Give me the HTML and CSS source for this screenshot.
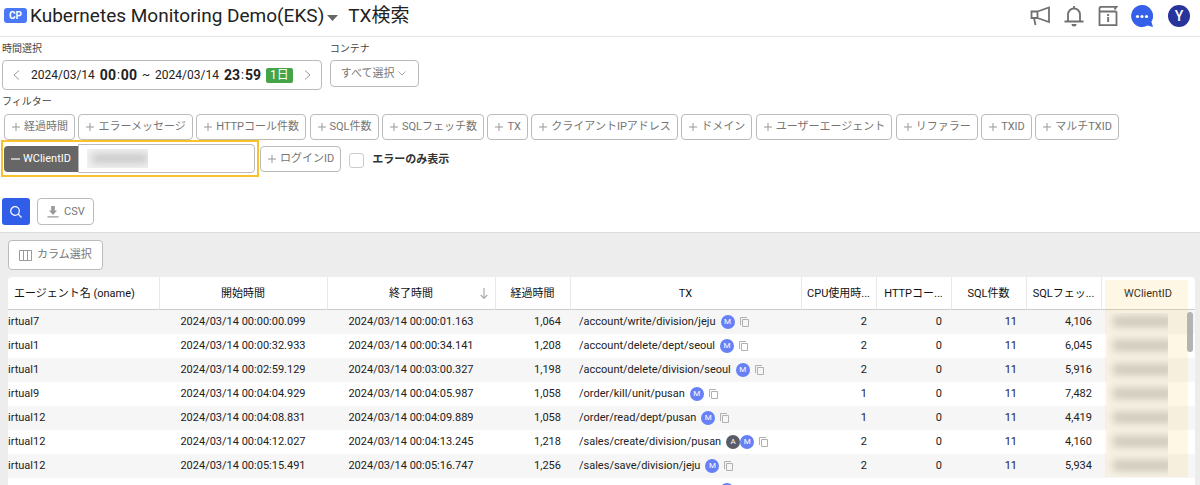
FILE: index.html
```html
<!DOCTYPE html>
<html lang="ja">
<head>
<meta charset="utf-8">
<title>TX検索</title>
<link rel="stylesheet" href="styles.css">
</head>
<body>
<svg class="defs" width="0" height="0" aria-hidden="true">
  <symbol id="plus" viewBox="0 0 10 10"><path d="M5 1v8M1 5h8" fill="none" stroke="currentColor"/></symbol>
  <symbol id="copy" viewBox="0 0 10 10"><path d="M3.500 2.500h6v7h-6zM1.500 8V.5H8" fill="none" stroke="currentColor"/></symbol>
</svg>
<header class="topbar">
  <span class="product">CP</span>
  <button class="project" type="button">Kubernetes Monitoring Demo(EKS)<svg class="caret" viewBox="0 0 11 6"><path d="M0 0h11L5.500 6z" fill="currentColor"/></svg></button>
  <h1 class="title">TX検索</h1>
  <nav class="tools" aria-label="ツール">
    <button class="tool" type="button" aria-label="お知らせ"><svg viewBox="0 0 22 22"><path d="M2.500 6.500h6v6.500h-6zM8.500 6.500l11.500-4v14.500L8.500 13M5 13l1.500 7" fill="none" stroke="currentColor" stroke-width="1.800"/></svg></button>
    <button class="tool" type="button" aria-label="通知"><svg viewBox="0 0 22 22"><path d="M1.500 16.500h19M5 16V9.500a6 6 0 0 1 12 0V16M11 1v3" fill="none" stroke="currentColor" stroke-width="1.800"/><path d="M8.500 19h5a2.500 2.500 0 0 1-5 0z" fill="currentColor"/></svg></button>
    <button class="tool" type="button" aria-label="ガイド"><svg viewBox="0 0 22 22"><path d="M19.500 6.500v13.700h-17V3.500q0-1.700 1.700-1.700h15.300l-2 2.700M2.500 6.500h17" fill="none" stroke="currentColor" stroke-width="1.800"/><path d="M10.200 9h1.900v1.900h-1.900zM10.200 12h1.900v5h-1.900z" fill="currentColor"/></svg></button>
    <button class="tool chat" type="button" aria-label="チャット"><svg viewBox="0 0 22 22"><path d="M11 0a11 11 0 1 0 5.500 20.600L22 22l-1.600-5.200A11 11 0 0 0 11 0z" fill="currentColor"/><g fill="#fff"><circle cx="6.500" cy="11.500" r="1.600"/><circle cx="11" cy="11.500" r="1.600"/><circle cx="15.500" cy="11.500" r="1.600"/></g></svg></button>
    <button class="avatar" type="button">Y</button>
  </nav>
</header>

<main class="main">
<section class="search">
  <div class="pickers">
    <div class="field">
      <span class="label">時間選択</span>
      <div class="period">
        <button class="step" type="button" aria-label="前へ"><svg viewBox="0 0 7 10"><path d="M6 .5L1 5l5 4.500" fill="none" stroke="currentColor"/></svg></button>
        <div class="range"><span>2024/03/14</span><span class="clock"><b>00</b>:<b>00</b></span><span>~</span><span>2024/03/14</span><span class="clock"><b>23</b>:<b>59</b></span></div>
        <span class="days">1日</span>
        <button class="step" type="button" aria-label="次へ"><svg viewBox="0 0 7 10"><path d="M1 .5L6 5 1 9.500" fill="none" stroke="currentColor"/></svg></button>
      </div>
    </div>
    <div class="field">
      <span class="label">コンテナ</span>
      <button class="container-pick" type="button">すべて選択<svg viewBox="0 0 8 5"><path d="M.5.5L4 4 7.500.5" fill="none" stroke="currentColor"/></svg></button>
    </div>
  </div>
  <span class="label">フィルター</span>
  <div class="filters">
    <button class="chip" type="button"><svg><use href="#plus"/></svg>経過時間</button>
    <button class="chip" type="button"><svg><use href="#plus"/></svg>エラーメッセージ</button>
    <button class="chip" type="button"><svg><use href="#plus"/></svg>HTTPコール件数</button>
    <button class="chip" type="button"><svg><use href="#plus"/></svg>SQL件数</button>
    <button class="chip" type="button"><svg><use href="#plus"/></svg>SQLフェッチ数</button>
    <button class="chip" type="button"><svg><use href="#plus"/></svg>TX</button>
    <button class="chip" type="button"><svg><use href="#plus"/></svg>クライアントIPアドレス</button>
    <button class="chip" type="button"><svg><use href="#plus"/></svg>ドメイン</button>
    <button class="chip" type="button"><svg><use href="#plus"/></svg>ユーザーエージェント</button>
    <button class="chip" type="button"><svg><use href="#plus"/></svg>リファラー</button>
    <button class="chip" type="button"><svg><use href="#plus"/></svg>TXID</button>
    <button class="chip" type="button"><svg><use href="#plus"/></svg>マルチTXID</button>
  </div>
  <div class="filters second">
    <div class="active">
      <button class="remove" type="button" id="wclient"><svg viewBox="0 0 10 10"><path d="M0 5h10" stroke="currentColor" stroke-width="1.300"/></svg>WClientID</button>
      <div class="value"><input type="text" aria-labelledby="wclient"><span class="masked"><i></i></span></div>
    </div>
    <button class="chip" type="button"><svg><use href="#plus"/></svg>ログインID</button>
    <label class="only-errors"><input type="checkbox">エラーのみ表示</label>
  </div>
  <div class="actions">
    <button class="go" type="button" aria-label="検索"><svg viewBox="0 0 12 12"><circle cx="5" cy="5" r="4.300" fill="none" stroke="currentColor" stroke-width="1.200"/><path d="M8.200 8.200l3.300 3.300" stroke="currentColor" stroke-width="1.200"/></svg></button>
    <button class="csv" type="button"><svg viewBox="0 0 12 12"><path d="M4.200 0h3.600v4.500H10L6 9 2 4.500h2.200zM.5 10.300h11v1.200H.5z" fill="currentColor"/></svg>CSV</button>
  </div>
</section>

<section class="results">
  <button class="columns" type="button"><svg viewBox="0 0 13 11"><path d="M.5.5h12v10H.5zM4.500.5v10M8.500.5v10" fill="none" stroke="currentColor"/></svg>カラム選択</button>
  <div class="card">
    <table class="grid">
      <colgroup><col class="c-agent"><col class="c-time"><col class="c-time"><col class="c-num"><col class="c-tx"><col class="c-num"><col class="c-num"><col class="c-num"><col class="c-num"><col class="c-client"></colgroup>
      <thead><tr><th class="left">エージェント名 (oname)</th><th>開始時間</th><th class="sorted">終了時間<svg viewBox="0 0 8 11"><path d="M4 0v10M.7 7L4 10.300 7.300 7" fill="none" stroke="currentColor" stroke-width="1.200"/></svg></th><th>経過時間</th><th>TX</th><th>CPU使用時...</th><th>HTTPコー...</th><th>SQL件数</th><th>SQLフェッ...</th><th>WClientID</th></tr></thead>
      <tbody>
        <tr><td>irtual7</td><td>2024/03/14 00:00:00.099</td><td>2024/03/14 00:00:01.163</td><td>1,064</td><td><span class="tx">/account/write/division/jeju<b class="m">M</b><svg><use href="#copy"/></svg></span></td><td>2</td><td>0</td><td>11</td><td>4,106</td><td></td></tr>
        <tr><td>irtual1</td><td>2024/03/14 00:00:32.933</td><td>2024/03/14 00:00:34.141</td><td>1,208</td><td><span class="tx">/account/delete/dept/seoul<b class="m">M</b><svg><use href="#copy"/></svg></span></td><td>2</td><td>0</td><td>11</td><td>6,045</td><td></td></tr>
        <tr><td>irtual1</td><td>2024/03/14 00:02:59.129</td><td>2024/03/14 00:03:00.327</td><td>1,198</td><td><span class="tx">/account/delete/division/seoul<b class="m">M</b><svg><use href="#copy"/></svg></span></td><td>2</td><td>0</td><td>11</td><td>5,916</td><td></td></tr>
        <tr><td>irtual9</td><td>2024/03/14 00:04:04.929</td><td>2024/03/14 00:04:05.987</td><td>1,058</td><td><span class="tx">/order/kill/unit/pusan<b class="m">M</b><svg><use href="#copy"/></svg></span></td><td>1</td><td>0</td><td>11</td><td>7,482</td><td></td></tr>
        <tr><td>irtual12</td><td>2024/03/14 00:04:08.831</td><td>2024/03/14 00:04:09.889</td><td>1,058</td><td><span class="tx">/order/read/dept/pusan<b class="m">M</b><svg><use href="#copy"/></svg></span></td><td>1</td><td>0</td><td>11</td><td>4,419</td><td></td></tr>
        <tr><td>irtual12</td><td>2024/03/14 00:04:12.027</td><td>2024/03/14 00:04:13.245</td><td>1,218</td><td><span class="tx">/sales/create/division/pusan<b class="a">A</b><b class="m">M</b><svg><use href="#copy"/></svg></span></td><td>2</td><td>0</td><td>11</td><td>4,160</td><td></td></tr>
        <tr><td>irtual12</td><td>2024/03/14 00:05:15.491</td><td>2024/03/14 00:05:16.747</td><td>1,256</td><td><span class="tx">/sales/save/division/jeju<b class="m">M</b><svg><use href="#copy"/></svg></span></td><td>2</td><td>0</td><td>11</td><td>5,934</td><td></td></tr>
        <tr><td></td><td></td><td></td><td></td><td><span class="tx"><span class="pending"></span><b class="m"></b></span></td><td></td><td></td><td></td><td></td><td></td></tr>
      </tbody>
    </table>
    <div class="highlight"><div class="mask"><i></i><i></i><i></i><i></i><i></i><i></i><i></i></div></div>
    <span class="thumb"></span>
  </div>
</section>
</main>
</body>
</html>
```

FILE: styles.css
```css
* { box-sizing: border-box; }
body {
  margin: 0;
  height: 100vh;
  display: flex;
  flex-direction: column;
  overflow: hidden;
  background: #fff;
  color: #222;
  font: 12px/16px Roboto, "Noto Sans CJK JP", sans-serif;
}
button { font: inherit; color: inherit; background: none; border: 0; padding: 0; margin: 0; white-space: nowrap; }
svg { flex: none; display: block; }
.defs { position: absolute; }

.topbar {
  flex: none;
  display: flex;
  align-items: center;
  height: 37px;
  padding: 0 10px 5px 4px;
  border-bottom: 1px solid #e6e6e6;
}
.product {
  width: 23px;
  border-radius: 3px;
  background: #4a78f7;
  color: #fff;
  font-size: 10px;
  font-weight: 700;
  line-height: 15px;
  text-align: center;
}
.project { display: flex; align-items: center; gap: 3px; margin-left: 3px; font-size: 19px; line-height: 24px; }
.caret { width: 11px; height: 6px; color: #666; margin-top: 4px; }
.title { margin: 0 0 0 10px; font-size: 19px; font-weight: 400; line-height: 24px; }
.tools { display: flex; align-items: center; gap: 12px; margin-left: auto; }
.tool, .tool svg { width: 22px; height: 22px; color: #707070; }
.tool.chat svg { color: #3460ea; }
.avatar { width: 22px; height: 22px; margin-left: 3px; border-radius: 50%; background: #28349c; color: #fff; font-size: 14px; font-weight: 500; line-height: 22px; }

.main { flex: 1; min-height: 0; display: flex; flex-direction: column; }
.search { flex: none; padding: 4px 2px 7px; border-bottom: 1px solid #ddd; }
.pickers { display: flex; gap: 8px; margin-bottom: 4px; }
.label { display: block; color: #444; font-size: 10px; line-height: 16px; }
.period, .container-pick {
  display: flex;
  align-items: center;
  border: 1px solid #bbb;
  border-radius: 4px;
  margin-top: 3px;
}
.period { height: 30px; padding: 0 10px; }
.range, .clock { display: flex; align-items: center; }
.range { gap: 5px; margin: 0 5px 0 11px; }
.clock { gap: 1px; }
.clock b { font-size: 14px; font-weight: 700; }
.days { padding: 0 4px; border-radius: 2px; background: #43a547; color: #fff; line-height: 15px; }
.step svg { width: 7px; height: 10px; color: #999; }
.step:last-child { margin-left: 11px; }
.container-pick { height: 27px; padding: 0 12px 0 10px; gap: 3px; color: #777; font-size: 11px; }
.container-pick svg { width: 8px; height: 5px; color: #aaa; }

.filters { display: flex; justify-content: space-between; gap: 3px; max-width: 1119px; padding: 4px 2px 0; }
.chip {
  display: flex;
  align-items: center;
  gap: 3px;
  height: 26px;
  padding: 0 6px;
  border: 1px solid #bbb;
  border-radius: 4px;
  color: #757575;
  font-size: 11px;
}
.chip svg { width: 10px; height: 10px; color: #999; }
.filters.second { align-items: center; justify-content: flex-start; padding: 0; margin-left: -1px; gap: 1px; }
.active { display: flex; align-items: center; width: 258px; height: 37px; padding: 0 2px 0 1px; border: 2px solid #f8c22f; }
.remove { display: flex; align-items: center; gap: 3px; height: 26px; padding: 0 7px; border-radius: 4px 0 0 4px; background: #666; color: #fff; font-size: 11px; }
.remove svg { width: 9px; height: 10px; }
.value { position: relative; flex: 1; }
.value input { display: block; width: 100%; height: 29px; border: 1px solid #bbb; border-radius: 0 4px 4px 0; background: #fff; }
.masked { position: absolute; left: 9px; top: 5px; width: 61px; height: 19px; overflow: hidden; background: #f2f2f2; }
.masked i { display: block; margin: 5px 0 0 5px; height: 9px; background: #c4c4c4; filter: blur(4px); }
.only-errors { display: flex; align-items: center; gap: 8px; margin: 3px 0 0 7px; font-size: 11px; font-weight: 700; color: #333; }
.only-errors input { appearance: none; width: 15px; height: 15px; margin: 0; border: 1px solid #ccc; border-radius: 3px; }
.actions { display: flex; gap: 7px; margin-top: 21px; }
.go { display: flex; align-items: center; justify-content: center; width: 28px; height: 27px; border-radius: 3px; background: #315ee8; color: #fff; }
.go svg, .csv svg { width: 12px; height: 12px; }
.csv { display: flex; align-items: center; gap: 5px; height: 27px; padding: 0 8px 0 9px; border: 1px solid #bbb; border-radius: 4px; color: #777; font-size: 11px; }
.csv svg { color: #999; }

.results { flex: 1; min-height: 0; display: flex; flex-direction: column; align-items: stretch; gap: 7px; padding: 7px 5px 0 8px; background: #ededed; }
.columns { display: flex; align-items: center; align-self: flex-start; gap: 5px; flex: none; height: 30px; padding: 0 10px; border: 1px solid #bbb; border-radius: 4px; background: #fff; color: #777; font-size: 11px; }
.columns svg { width: 13px; height: 11px; color: #999; }
.card { position: relative; flex: 1; min-height: 0; overflow: hidden; border-radius: 4px 4px 0 0; background: #fff; }
.grid { width: 100%; table-layout: fixed; border-collapse: separate; border-spacing: 0; font-size: 11px; }
.c-agent { width: 152px; }
.c-time { width: 168px; }
.c-num { width: 75px; }
.c-client { width: 93px; }
.grid th { height: 33px; padding: 1px 4px 0 3px; border-right: 1px solid #e8e8e8; border-bottom: 1px solid #ccc; color: #111; font-weight: 400; text-align: center; white-space: nowrap; }
.grid th:last-child { border-right: 0; }
.grid th.left { text-align: left; padding-left: 6px; }
.sorted { position: relative; }
.sorted svg { position: absolute; right: 7px; top: 11px; width: 8px; height: 11px; color: #aaa; }
.grid td { height: 24px; padding: 0 10px 0 8px; text-align: right; white-space: nowrap; }
.grid td:first-child { text-align: left; padding: 0; }
.grid td:nth-child(2), .grid td:nth-child(3) { text-align: center; }
.grid tbody tr:nth-child(odd) { background: #f6f6f6; }
.tx { display: flex; align-items: center; }
.tx b { width: 14px; height: 14px; border-radius: 50%; color: #fff; font-size: 8px; font-weight: 400; line-height: 14px; text-align: center; }
.m { background: #6780f5; }
.a { background: #5c5c66; }
.tx b:first-of-type { margin-left: 5px; }
.tx svg { width: 10px; height: 10px; margin-left: 4px; color: #b0b0b0; }
.pending { width: 136px; }
.highlight { position: absolute; top: 3px; right: 7px; width: 83px; height: 197px; padding: 33px 0 0 2px; background: rgba(255, 205, 100, 0.16); }
.mask { width: 61px; height: 164px; overflow: hidden; background: #f8f3e5; }
.mask i { display: block; height: 11px; margin: 3px -6px 13px 6px; background: #cbc6b8; filter: blur(4px); }
.thumb { position: absolute; top: 35px; right: 2px; width: 6px; height: 40px; border-radius: 3px; background: #b3b3b3; }
```
